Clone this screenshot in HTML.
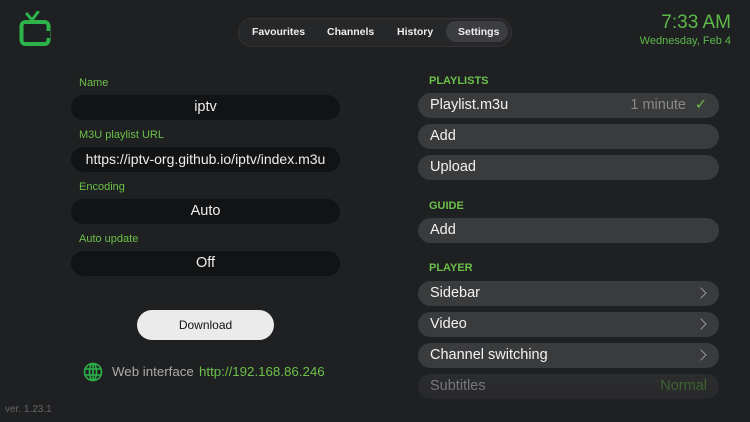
<!DOCTYPE html>
<html><head><style>
body{margin:0;width:750px;height:422px;background:#1f2022;font-family:"Liberation Sans",sans-serif;position:relative;overflow:hidden;color:#fff}
.a{position:absolute}
.lbl{position:absolute;left:79px;font-size:11px;color:#6cc04a}
.inp{position:absolute;left:71px;width:269px;height:25px;border-radius:13px;background:#121314;text-align:center;line-height:25px;font-size:14.5px;color:#eee}
.sec{position:absolute;left:429px;font-size:11px;font-weight:bold;color:#6cc04a}
.row{position:absolute;left:418px;width:301px;height:25px;border-radius:13px;background:#3a3b3d;font-size:14.5px;line-height:25px;color:#f2f2f2}
.row span{position:absolute;left:12px}
.chev{position:absolute;right:14px;top:8px;width:7px;height:7px;border-right:1.5px solid #999;border-top:1.5px solid #999;transform:rotate(45deg)}
</style></head><body>
<svg class="a" style="left:18px;top:11px" width="34" height="36" viewBox="0 0 34 36"><path d="M9 3 L14 9 L20 1" stroke="#2db34a" stroke-width="3" fill="none" stroke-linecap="round"/><rect x="3.5" y="11" width="27" height="22" rx="4" stroke="#2db34a" stroke-width="4" fill="none"/><rect x="20" y="20" width="12" height="7" fill="#1f2022"/></svg>
<div class="a" style="left:238px;top:18px;width:272px;height:27px;border-radius:14px;background:#262729;border:1px solid #333"></div>
<div class="a" style="left:446px;top:21px;width:62px;height:21px;border-radius:11px;background:#3c3d40"></div>
<div class="a" style="left:252px;top:26px;font-size:10.5px;font-weight:bold;color:#eee">Favourites</div>
<div class="a" style="left:327px;top:26px;font-size:10.5px;font-weight:bold;color:#eee">Channels</div>
<div class="a" style="left:397px;top:26px;font-size:10.5px;font-weight:bold;color:#eee">History</div>
<div class="a" style="left:458px;top:26px;font-size:10.5px;font-weight:bold;color:#eee">Settings</div>
<div class="a" style="right:19px;top:12px;font-size:19px;color:#5cb94a">7:33 AM</div>
<div class="a" style="right:19px;top:35px;font-size:11px;color:#5cb94a">Wednesday, Feb 4</div>
<div class="lbl" style="top:77px">Name</div>
<div class="inp" style="top:95px">iptv</div>
<div class="lbl" style="top:129px">M3U playlist URL</div>
<div class="inp" style="top:147px;font-size:14px">https://iptv-org.github.io/iptv/index.m3u</div>
<div class="lbl" style="top:181px">Encoding</div>
<div class="inp" style="top:199px">Auto</div>
<div class="lbl" style="top:233px">Auto update</div>
<div class="inp" style="top:251px">Off</div>
<div class="a" style="left:137px;top:310px;width:137px;height:30px;border-radius:15px;background:#ebebeb;color:#111;font-size:12px;text-align:center;line-height:30px">Download</div>
<svg class="a" style="left:83px;top:362px" width="20" height="20" viewBox="0 0 20 20" fill="none" stroke="#2db34a" stroke-width="1.6"><circle cx="10" cy="10" r="8.5"/><ellipse cx="10" cy="10" rx="3.5" ry="8.5"/><path d="M2 7h16M2 13h16M10 1.5v17"/></svg>
<div class="a" style="left:112px;top:364px;font-size:13.3px;color:#aaa">Web interface</div>
<div class="a" style="left:199px;top:364px;font-size:13.3px;color:#6cc04a">http://192.168.86.246</div>
<div class="a" style="left:5px;top:404px;font-size:10px;color:#666">ver. 1.23.1</div>
<div class="sec" style="top:75px">PLAYLISTS</div>
<div class="row" style="top:93px"><span>Playlist.m3u</span><span style="left:auto;right:33px;color:#888">1 minute</span><span style="left:auto;right:12px;color:#6cc04a">✓</span></div>
<div class="row" style="top:124px"><span>Add</span></div>
<div class="row" style="top:155px"><span>Upload</span></div>
<div class="sec" style="top:200px">GUIDE</div>
<div class="row" style="top:218px"><span>Add</span></div>
<div class="sec" style="top:262px">PLAYER</div>
<div class="row" style="top:281px"><span>Sidebar</span><div class="chev"></div></div>
<div class="row" style="top:312px"><span>Video</span><div class="chev"></div></div>
<div class="row" style="top:343px"><span>Channel switching</span><div class="chev"></div></div>
<div class="row" style="top:374px;opacity:.45"><span>Subtitles</span><span style="left:auto;right:12px;color:#6cc04a">Normal</span></div>
<div class="a" style="left:410px;top:378px;width:320px;height:44px;background:linear-gradient(rgba(31,32,34,0),rgba(31,32,34,.6))"></div>
</body></html>
